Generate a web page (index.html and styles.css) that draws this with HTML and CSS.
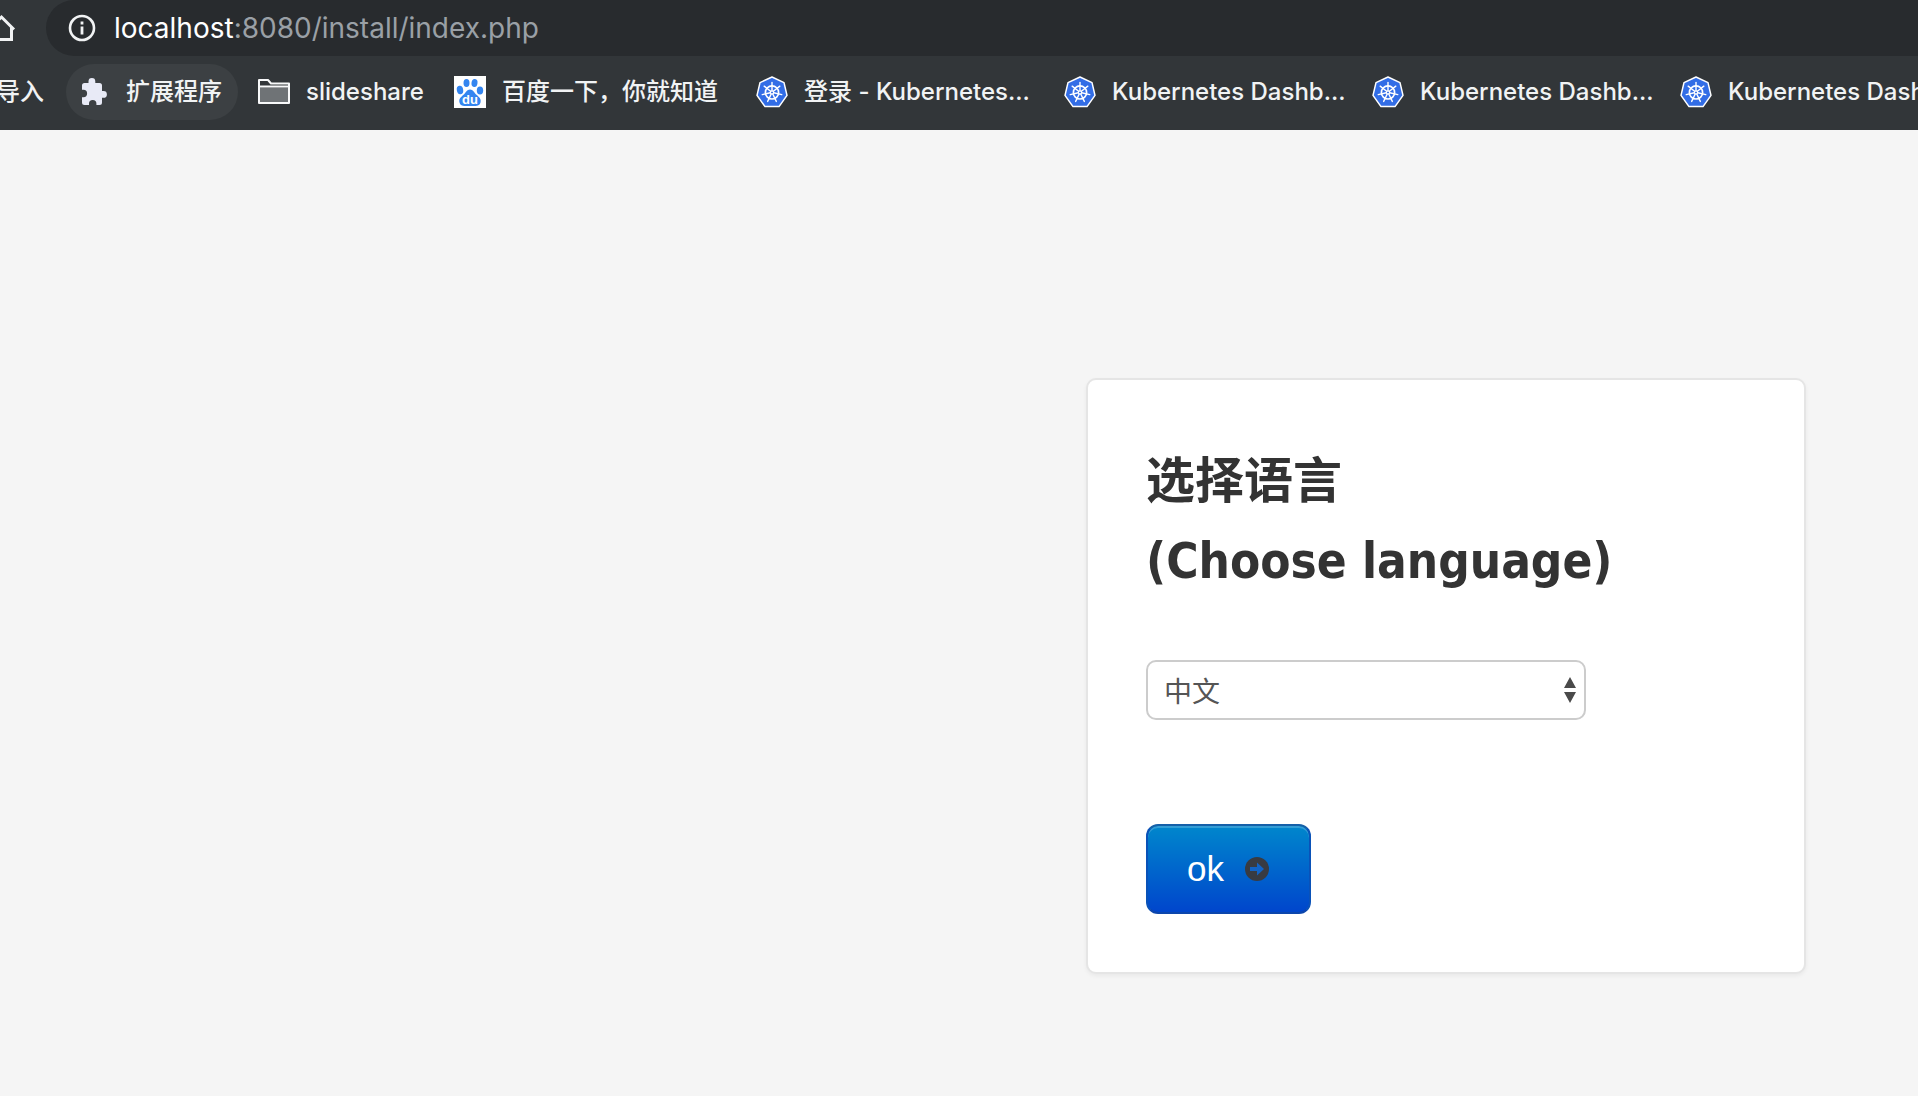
FILE: index.html
```html
<!DOCTYPE html>
<html lang="zh-CN">
<head>
<meta charset="utf-8">
<title>选择语言 (Choose language)</title>
<link rel="stylesheet" href="styles.css">
</head>
<body>
<svg class="symbols" aria-hidden="true">
  <symbol id="k8s" viewBox="0 0 32 32">
    <path d="M16 1 28 6.6 31 19.4 23 30.6H9L1 19.4 4 6.6Z" fill="#326de6" stroke="#fff" stroke-width="1.5" stroke-linejoin="round"/>
    <g fill="none" stroke="#fff" stroke-linecap="round">
      <circle cx="16" cy="16.4" r="6.6" stroke-width="1.7"/>
      <g stroke-width="1.4">
        <path d="M16 14.6V6.4"/>
        <path d="M16 14.6V6.4" transform="rotate(51.43 16 16.4)"/>
        <path d="M16 14.6V6.4" transform="rotate(102.86 16 16.4)"/>
        <path d="M16 14.6V6.4" transform="rotate(154.29 16 16.4)"/>
        <path d="M16 14.6V6.4" transform="rotate(205.71 16 16.4)"/>
        <path d="M16 14.6V6.4" transform="rotate(257.14 16 16.4)"/>
        <path d="M16 14.6V6.4" transform="rotate(308.57 16 16.4)"/>
      </g>
      <circle cx="16" cy="16.4" r="1.6" stroke-width="1.2"/>
    </g>
  </symbol>
</svg>

<header class="browser">
  <div class="toolbar">
    <button class="home" type="button" aria-label="Home">
      <svg width="46" height="56" viewBox="0 0 46 56" fill="none" stroke="#f1f3f4" stroke-width="3"><path d="M-11 29.5 1.500 17 14 29.500M11.500 27.500V39.500H-9V27.500"/></svg>
    </button>
    <div class="address">
      <svg width="28" height="28" viewBox="0 0 28 28" fill="none" stroke="#f1f3f4"><circle cx="14" cy="14" r="12" stroke-width="2.600"/><path d="M14 12.500V20.500M14 7.500V10.500" stroke-width="2.800"/></svg>
      <span class="url"><span class="url-host">localhost</span>:8080/install/index.php</span>
    </div>
  </div>
  <nav class="bookmarks">
    <a class="bookmark bookmark-first" href="#"><span>导入</span></a>
    <a class="bookmark bookmark-active" href="#">
      <svg width="32" height="32" viewBox="0 0 32 32" fill="#e8eaf6"><path d="M25.500 15H24V9.500Q24 7 21.500 7H17.300V5.500A3.400 3.400 0 0 0 10.500 5.500V7H6.500Q4 7 4 9.500V13.800H5.400A3.700 3.700 0 0 1 5.400 21.200H4V26.500Q4 29 6.500 29H11V27.600A3.700 3.700 0 0 1 18.400 27.600V29H21.500Q24 29 24 26.500V21.800H25.500A3.400 3.400 0 0 0 25.500 15Z"/></svg>
      <span>扩展程序</span>
    </a>
    <a class="bookmark" href="#">
      <svg width="32" height="32" viewBox="0 0 32 32"><path d="M1 27V4H10L13 7.500H31V27Z" fill="#323639" stroke="#f8f9fa" stroke-width="2" stroke-linejoin="round"/><path d="M2 11.500H30V26H2Z" fill="#6f7376"/><path d="M1 10.500H31" stroke="#f8f9fa" stroke-width="2"/></svg>
      <span class="title-folder">slideshare</span>
    </a>
    <a class="bookmark" href="#">
      <svg width="32" height="32" viewBox="0 0 32 32"><path d="M0 0H32V32H0Z" fill="#fff"/><g fill="#3385f0"><ellipse cx="6" cy="14" rx="3.200" ry="4.200" transform="rotate(-10 6 14)"/><ellipse cx="12.500" cy="7" rx="3" ry="4"/><ellipse cx="20.500" cy="7" rx="3" ry="4" transform="rotate(8 20.500 7)"/><ellipse cx="26" cy="14.500" rx="3.200" ry="4"/><path d="M16 13.500C19 13.500 20 16.500 22.500 18.800 25 21 27.500 23 26.500 26.500 25.500 30.500 21.500 30 16 30S6.500 30.500 5.500 26.500C4.500 23 7 21 9.500 18.800 12 16.500 13 13.500 16 13.500Z"/></g><text class="baidu-text" x="16" y="28" text-anchor="middle">du</text></svg>
      <span class="title-short">百度一下，你就知道</span>
    </a>
    <a class="bookmark" href="#"><svg width="32" height="32"><use href="#k8s"/></svg><span class="title-long">登录 - Kubernetes...</span></a>
    <a class="bookmark" href="#"><svg width="32" height="32"><use href="#k8s"/></svg><span class="title-long">Kubernetes Dashb...</span></a>
    <a class="bookmark" href="#"><svg width="32" height="32"><use href="#k8s"/></svg><span class="title-long">Kubernetes Dashb...</span></a>
    <a class="bookmark" href="#"><svg width="32" height="32"><use href="#k8s"/></svg><span class="title-long">Kubernetes Dashb...</span></a>
  </nav>
</header>

<main class="page">
  <form class="card">
    <h1 class="heading"><label for="language">选择语言<br>(Choose language)</label></h1>
    <div class="select-wrap">
      <select class="select" id="language">
        <option>中文</option>
        <option>English</option>
      </select>
      <svg class="select-arrows" width="12" height="26" viewBox="0 0 12 26" fill="#4a4a4a"><path d="M6 0 12 11H0ZM0 15H12L6 26Z"/></svg>
    </div>
    <button class="ok" type="button">
      ok
      <svg width="26" height="26" viewBox="0 0 26 26"><circle cx="13" cy="13" r="12" fill="#383b42"/><path d="M6 11H13V6.500L20 13 13 19.500V15H6Z" fill="#1263c4"/></svg>
    </button>
  </form>
</main>
</body>
</html>
```
FILE: styles.css
```css
* {
  box-sizing: border-box;
}

body {
  margin: 0;
  min-height: 100vh;
  background: #f5f5f5;
  color: #333;
  font-family: "Liberation Sans", "Noto Sans CJK SC", sans-serif;
  overflow-x: hidden;
}

svg {
  display: block;
  flex: none;
}

.symbols {
  display: none;
}

/* Browser chrome */
.browser {
  height: 130px;
  background: #323639;
  font-family: Inter, "Noto Sans CJK SC", sans-serif;
  overflow: hidden;
}

.toolbar {
  display: flex;
  height: 56px;
}

.home {
  padding: 0;
  border: 0;
  background: none;
}

.address {
  flex: 1;
  display: flex;
  align-items: center;
  gap: 18px;
  padding-left: 22px;
  border-radius: 28px 0 0 28px;
  background: #282b2e;
}

.url {
  color: #9aa0a6;
  font-size: 28px;
  line-height: 56px;
}

.url-host {
  color: #fff;
}

.bookmarks {
  display: flex;
  gap: 8px;
  padding-top: 8px;
}

.bookmark {
  flex: none;
  display: flex;
  align-items: center;
  gap: 16px;
  height: 56px;
  padding: 0 12px;
  border-radius: 28px;
  color: #f1f3f4;
  font-size: 24px;
  font-weight: 500;
  line-height: 32px;
  text-decoration: none;
  white-space: nowrap;
}

.bookmark-first {
  margin-left: -16px;
  padding-right: 14px;
}

.bookmark-active {
  padding-right: 16px;
  background: #3c4043;
}

.title-folder {
  width: 116px;
}

.title-short {
  width: 222px;
}

.title-long {
  width: 228px;
}

.baidu-text {
  fill: #fff;
  font: bold 13px "Liberation Sans", sans-serif;
}

/* Language form */
.page {
  display: flex;
  justify-content: flex-end;
  padding: 248px 112px 80px 16px;
}

.card {
  width: 100%;
  max-width: 720px;
  padding: 62px 58px 58px;
  border: 2px solid #e5e5e5;
  border-radius: 10px;
  background: #fff;
  box-shadow: 0 2px 4px rgba(0, 0, 0, 0.05);
}

.heading {
  margin: 0 0 58px;
  font-family: "DejaVu Sans Condensed", "Noto Sans CJK SC", sans-serif;
  font-size: 49px;
  line-height: 80px;
}

.select-wrap {
  position: relative;
  max-width: 440px;
  margin-bottom: 104px;
}

.select {
  display: block;
  width: 100%;
  height: 60px;
  padding: 0 40px 0 16px;
  border: 2px solid #ccc;
  border-radius: 10px;
  appearance: none;
  background: #fff;
  color: #555;
  font-family: "Noto Sans CJK SC", sans-serif;
  font-size: 28px;
}

.select-arrows {
  position: absolute;
  top: 17px;
  right: 10px;
  pointer-events: none;
}

.ok {
  display: flex;
  align-items: center;
  gap: 20px;
  height: 90px;
  padding: 0 39px;
  border: 2px solid;
  border-color: #1560a8 #0a52b8 #0c46ac;
  border-radius: 12px;
  background: linear-gradient(#08c, #04c) border-box;
  box-shadow: inset 0 2px 0 rgba(255, 255, 255, 0.2);
  color: #fff;
  font-family: inherit;
  font-size: 35px;
}
```
